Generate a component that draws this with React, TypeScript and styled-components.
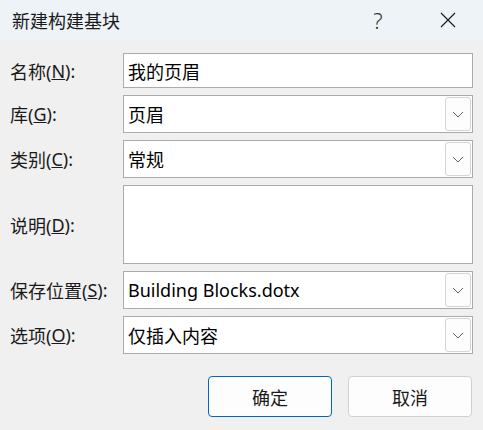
import React from "react";
import styled, { createGlobalStyle } from "styled-components";

const GlobalStyle = createGlobalStyle`
  html, body {
    margin: 0;
    padding: 0;
    background: #f0f0f0;
  }
  body {
    font-family: "Noto Sans", "Noto Sans CJK SC", sans-serif;
    color: #000;
  }
`;

const Dialog = styled.div`
  width: 483px;
  height: 430px;
  background: #f0f0f0;
  overflow: hidden;
  font-size: 18px;
`;

const TitleBar = styled.div`
  height: 40px;
  background: #eef3f8;
  display: flex;
  align-items: center;
  padding-left: 12px;
`;

const Title = styled.div`
  flex: 1;
  font-size: 18px;
  color: #1a1a1a;
`;

const TitleButton = styled.div<{ $w: number }>`
  width: ${(p) => p.$w}px;
  height: 40px;
  display: flex;
  align-items: center;
  justify-content: center;
  font-family: "Noto Sans", sans-serif;
  font-weight: 300;
  font-size: 22px;
  color: #333;
`;

const Form = styled.div`
  display: grid;
  grid-template-columns: 113px 350px;
  row-gap: 7px;
  padding: 13px 0 0 10px;
`;

const Label = styled.label`
  display: flex;
  align-items: center;
  white-space: nowrap;
  font-size: 18px;
  color: #1a1a1a;
`;

const Field = styled.div<{ $h: number }>`
  height: ${(p) => p.$h}px;
  box-sizing: border-box;
  background: #fff;
  border: 1px solid #ababab;
  display: flex;
  align-items: center;
  padding-left: 4px;
`;

const Value = styled.div<{ $inset?: number }>`
  flex: 1;
  padding-left: ${(p) => p.$inset ?? 0}px;
  white-space: nowrap;
`;

const DropButton = styled.div`
  width: 26px;
  height: 34px;
  margin-right: 1px;
  box-sizing: border-box;
  border: 1px solid #d5d5d5;
  border-radius: 3px;
  background: #fdfdfd;
  display: flex;
  align-items: center;
  justify-content: center;
`;

const Buttons = styled.div`
  display: flex;
  justify-content: flex-end;
  gap: 16px;
  padding: 22px 11px 0 0;
`;

const Button = styled.button<{ $primary?: boolean }>`
  width: 124px;
  height: 41px;
  border-radius: 4px;
  background: #fdfdfd;
  border: 1px solid ${(p) => (p.$primary ? "#0067c0" : "#d0d0d0")};
  font-family: "Noto Sans CJK SC", sans-serif;
  font-size: 18px;
  color: #1a1a1a;
  padding: 0;
`;

const Chevron = () => (
  <svg width="12" height="7" viewBox="0 0 12 7">
    <path d="M1 1 L6 6 L11 1" fill="none" stroke="#606060" strokeWidth="1" />
  </svg>
);

const Close = () => (
  <svg width="16" height="16" viewBox="0 0 16 16">
    <path d="M1 1 L15 15 M15 1 L1 15" stroke="#1a1a1a" strokeWidth="1.2" />
  </svg>
);

const LabelText = ({ text, key1 }: { text: string; key1: string }) => (
  <Label>
    {text}(<u>{key1}</u>):
  </Label>
);

export default function App() {
  return (
    <>
      <GlobalStyle />
      <Dialog>
        <TitleBar>
          <Title>新建构建基块</Title>
          <TitleButton $w={70}>?</TitleButton>
          <TitleButton $w={70}>
            <Close />
          </TitleButton>
        </TitleBar>
        <Form>
          <LabelText text="名称" key1="N" />
          <Field $h={35}>
            <Value $inset={-2}>我的页眉</Value>
          </Field>

          <LabelText text="库" key1="G" />
          <Field $h={38}>
            <Value>页眉</Value>
            <DropButton>
              <Chevron />
            </DropButton>
          </Field>

          <LabelText text="类别" key1="C" />
          <Field $h={38}>
            <Value>常规</Value>
            <DropButton>
              <Chevron />
            </DropButton>
          </Field>

          <LabelText text="说明" key1="D" />
          <Field $h={79} />

          <LabelText text="保存位置" key1="S" />
          <Field $h={38}>
            <Value>Building Blocks.dotx</Value>
            <DropButton>
              <Chevron />
            </DropButton>
          </Field>

          <LabelText text="选项" key1="O" />
          <Field $h={38}>
            <Value>仅插入内容</Value>
            <DropButton>
              <Chevron />
            </DropButton>
          </Field>
        </Form>
        <Buttons>
          <Button $primary>确定</Button>
          <Button>取消</Button>
        </Buttons>
      </Dialog>
    </>
  );
}
